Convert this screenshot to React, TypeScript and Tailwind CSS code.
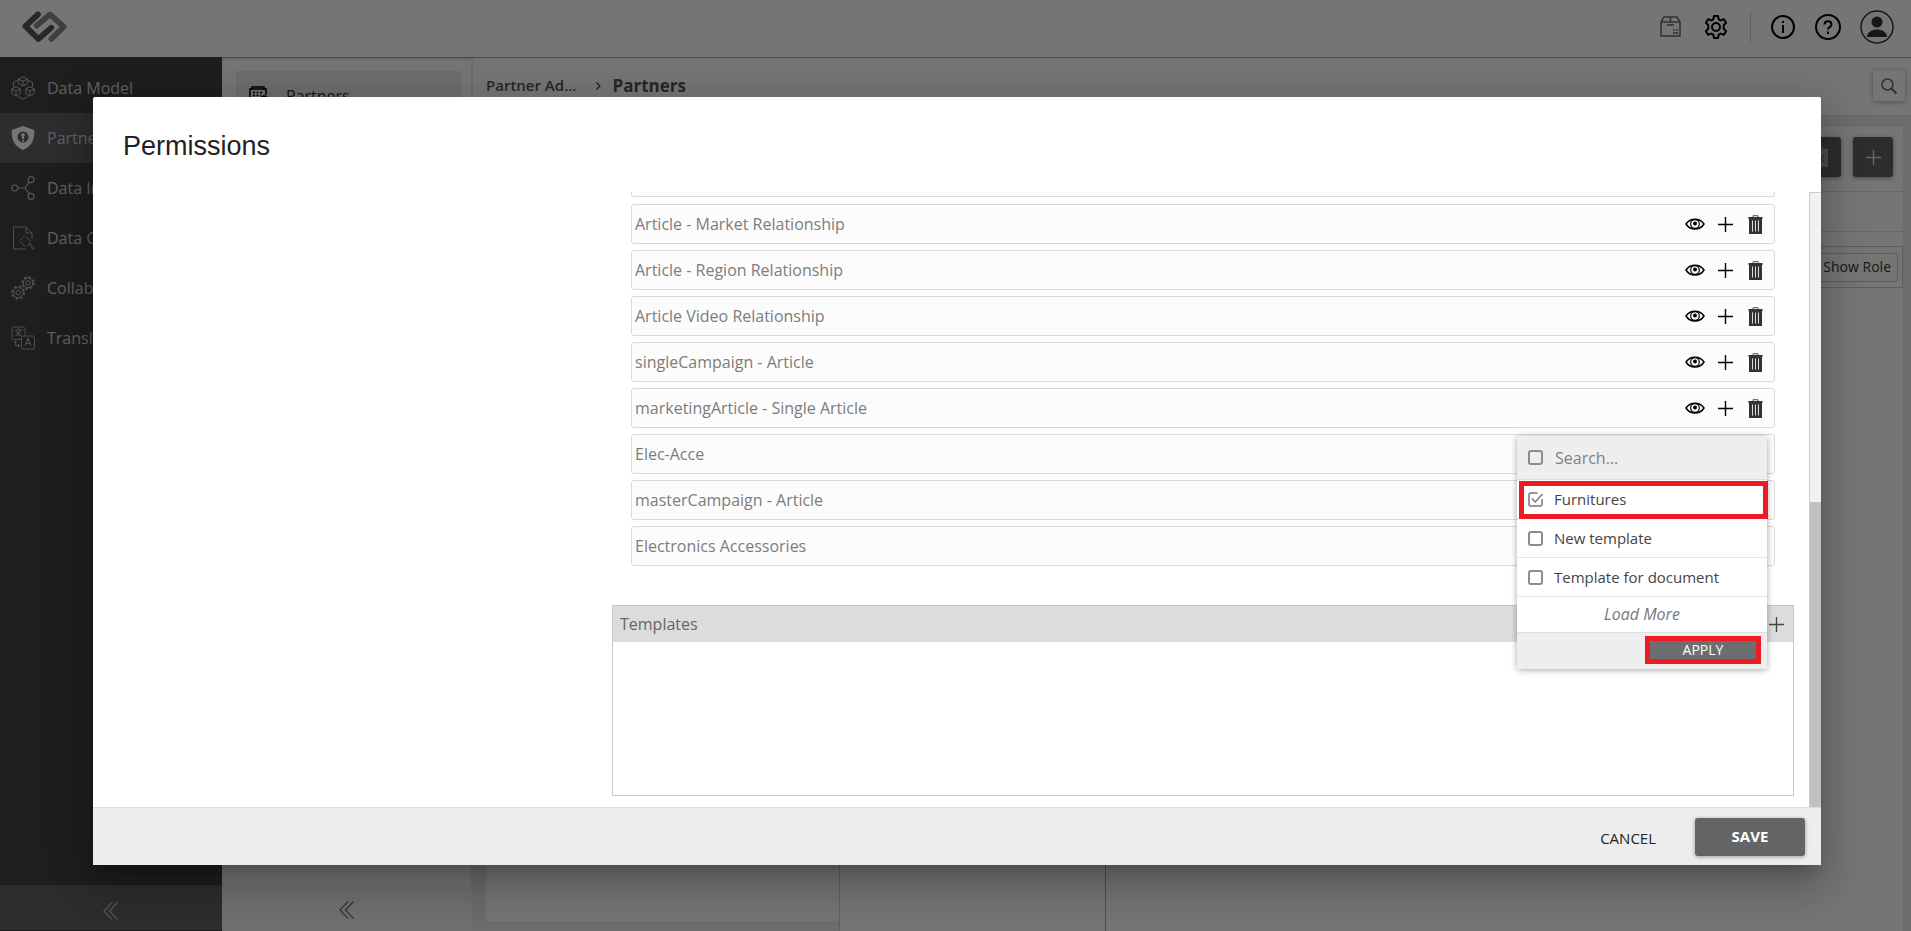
import { useState } from 'react';
import type { ReactNode } from 'react';

const relationships = [
  { name: 'Article - Market Relationship', actions: true },
  { name: 'Article - Region Relationship', actions: true },
  { name: 'Article Video Relationship', actions: true },
  { name: 'singleCampaign - Article', actions: true },
  { name: 'marketingArticle - Single Article', actions: true, menu: true },
  { name: 'Elec-Acce' },
  { name: 'masterCampaign - Article' },
  { name: 'Electronics Accessories' },
];

const Logo = () => (
  <svg className="h-[31px] w-[45px]" viewBox="0 0 135 93" fill="none" strokeWidth="17" strokeLinecap="round" strokeLinejoin="round">
    <path d="M44 44L84 10L125 47L88 84" stroke="#8a8a8a" />
    <path d="M48 10L10 46L49 84L88 50" stroke="#555" />
  </svg>
);

const BoxIcon = () => (
  <svg className="h-[21px] w-[21px]" viewBox="0 0 21 21" fill="none" stroke="#6b6b6b" strokeWidth="1.5">
    <path d="M1 6h19v14H1zM1 6l3-5h13l3 5M10.500 1v5M7 9h7M13 17h5M14 13v2M17 13v2" />
  </svg>
);

const GearIcon = () => (
  <svg className="h-[26px] w-[26px]" viewBox="0 0 26 26" fill="none" stroke="#000" strokeWidth="2" strokeLinejoin="round">
    <path d="M11 2h4l.7 3.3 2 1.1 3.2-1.2 2.2 3.6-2.4 2.4v3.6l2.4 2.4-2.2 3.6-3.2-1.2-2 1.1L15 24h-4l-.7-3.3-2-1.1-3.2 1.2-2.2-3.6 2.4-2.4v-3.6L2.900 8.800l2.200-3.600 3.200 1.200 2-1.100z" />
    <circle cx="13" cy="13" r="4" />
  </svg>
);

const InfoIcon = () => (
  <svg className="h-[26px] w-[26px]" viewBox="0 0 26 26" fill="none" stroke="#000" strokeWidth="2">
    <circle cx="13" cy="13" r="11" />
    <path d="M13 11v8M13 7v2" />
  </svg>
);

const HelpIcon = () => (
  <svg className="h-[26px] w-[26px]" viewBox="0 0 26 26" fill="none" stroke="#000" strokeWidth="2">
    <circle cx="13" cy="13" r="12" />
    <path d="M9.500 10.500c0-4.500 7-4.500 7 0 0 2.500-3.500 2.500-3.500 5M13 17.500v2.500" />
  </svg>
);

const UserIcon = () => (
  <svg className="h-[34px] w-[34px]" viewBox="0 0 34 34">
    <circle cx="17" cy="17" r="16" fill="none" stroke="#333" strokeWidth="1.500" />
    <circle cx="17" cy="12" r="5.500" fill="#333" />
    <path d="M7 27c0-10 20-10 20 0z" fill="#333" />
  </svg>
);

const SearchIcon = () => (
  <svg className="h-4 w-4" viewBox="0 0 16 16" fill="none" stroke="#666" strokeWidth="1.500">
    <circle cx="6.500" cy="6.500" r="5.500" />
    <path d="M10.500 10.500L15.500 15.500" strokeWidth="2" />
  </svg>
);

const PlusIcon = ({ className }: { className: string }) => (
  <svg className={className} viewBox="0 0 15 15" fill="none" stroke="currentColor" strokeWidth="1.400">
    <path d="M7.500 0v15M0 7.500h15" />
  </svg>
);

const EyeIcon = () => (
  <svg className="h-3 w-5" viewBox="0 0 20 12" fill="none" stroke="#000" strokeWidth="1.500">
    <path d="M1 6C5-.5 15-.5 19 6 15 12.500 5 12.500 1 6z" />
    <circle cx="10" cy="6" r="4.300" strokeWidth="1.200" />
    <circle cx="10" cy="5.500" r="2" fill="#000" stroke="none" />
  </svg>
);

const TrashIcon = () => (
  <svg className="h-[19px] w-[15px]" viewBox="0 0 15 19" fill="none">
    <path d="M5 2.500V.7h5v1.800" stroke="#555" />
    <path d="M.5 2h14v2H14v15H1V4H.5z" fill="#333" />
    <path d="M4.500 5.500v11M7.500 5.500v11M10.500 5.500v11" stroke="#ddd" />
  </svg>
);

const ChevronsLeft = ({ color }: { color: string }) => (
  <svg className="h-[18px] w-[15px]" viewBox="0 0 15 18" fill="none" stroke={color} strokeWidth="1.300">
    <path d="M9 .5L1 9l8 8.500M14.500 .5L6.500 9l8 8.500" />
  </svg>
);

const PartnersIcon = () => (
  <svg className="h-5 w-5" viewBox="0 0 20 20" fill="none" stroke="#000" strokeWidth="1.500">
    <path d="M3 3V1h12v2M1 18V3h16v6M1 18h9" />
    <path d="M4 6.500h10M4 9.500h8M4 12.500h5" strokeWidth="1.500" strokeDasharray="2 1.500" />
    <circle cx="15" cy="14" r="4" />
  </svg>
);

const sideIcon = 'h-6 w-6 shrink-0';

const navItems: { label: string; active?: boolean; icon: ReactNode }[] = [
  {
    label: 'Data Model',
    icon: (
      <svg className={sideIcon} viewBox="0 0 24 24" fill="none" stroke="#bbb">
        <path d="M12 .7l4.300 2.300v4.700L12 10 7.700 7.700V3zM7.700 3L12 5.300 16.300 3M12 5.300V10" />
        <path d="M5 10.700l4.300 2.300v4.700L5 20 .7 17.700V13zM.7 13L5 15.300 9.300 13M5 15.300V20" />
        <path d="M19 10.700l4.300 2.300v4.700L19 20l-4.300-2.300V13zM14.700 13l4.300 2.300 4.300-2.300M19 15.300V20" />
        <path d="M7 4L2.500 6.500v4M17 4l4.500 2.500v4M7 20.500l5 2.800 5-2.800" />
      </svg>
    ),
  },
  {
    label: 'Partner',
    active: true,
    icon: (
      <svg className={sideIcon} viewBox="0 0 24 24">
        <path d="M12 0l11.300 4c.5 10-3 16.500-11.300 20C3.700 20.500.2 14 .7 4z" fill="#fff" />
        <circle cx="12" cy="11" r="5.500" fill="#626268" />
        <path d="M12 7a2 2 0 0 1 1 3.500V13h-2v-2.500A2 2 0 0 1 12 7zM11 14h2v1.500h-2z" fill="#fff" />
      </svg>
    ),
  },
  {
    label: 'Data Integration',
    icon: (
      <svg className={sideIcon} viewBox="0 0 24 24" fill="none" stroke="#bbb" strokeWidth="1.200">
        <circle cx="3.700" cy="12" r="3" />
        <circle cx="20" cy="3.700" r="3" />
        <circle cx="20" cy="20.300" r="3" />
        <path d="M6.700 12H14l4.300-5.800M14 12l4.300 5.800" />
      </svg>
    ),
  },
  {
    label: 'Data Governance',
    icon: (
      <svg className={sideIcon} viewBox="0 0 24 24" fill="none" stroke="#aaa">
        <path d="M15 23H2.500V1H15l6 6v6M15 1v6h6" />
        <path d="M14 9.500l6 6M8.500 15l6 6M13 10.500l-3.500 3.500M19 16.500l-3.500 3.500" />
        <path d="M17.500 18l5 5.500 1.300-1.300-5.300-5.200" />
      </svg>
    ),
  },
  {
    label: 'Collaboration',
    icon: (
      <svg className={sideIcon} viewBox="0 0 24 24" fill="none" stroke="#bbb">
        <circle cx="7.200" cy="16.700" r="2.300" />
        <circle cx="7.200" cy="16.700" r="5" />
        <circle cx="7.200" cy="16.700" r="6.200" strokeWidth="1.500" strokeDasharray="2.400 2.470" />
        <circle cx="17" cy="7" r="2.200" />
        <circle cx="17" cy="7" r="4.800" />
        <circle cx="17" cy="7" r="6" strokeWidth="1.500" strokeDasharray="2.300 2.410" />
      </svg>
    ),
  },
  {
    label: 'Translation',
    icon: (
      <svg className={sideIcon} viewBox="0 0 24 24" fill="none" stroke="#aaa">
        <path d="M10 13.500H3a2 2 0 0 1-2-2V3a2 2 0 0 1 2-2h9a2 2 0 0 1 2 2v6.500" />
        <rect x="10.500" y="10" width="13" height="13" rx="1.500" />
        <path d="M3.500 4h8M7.500 2.500V4M4.500 10C8 8.500 9 7 9.500 4M5.500 5.500C6.500 8 8 9 10.500 10M14 19.500l3-7 3 7M15 17.500h4" strokeWidth="1.200" />
        <path d="M4.500 15v4.500h4M3 16.500l1.500-1.700L6 16.500M7 18l1.700 1.500L7 21" />
      </svg>
    ),
  },
];

const CheckBox = ({ checked, onChange, label }: { checked: boolean; onChange: () => void; label?: string }) => (
  <span className="relative flex h-[15px] w-[15px] shrink-0">
    <input
      type="checkbox"
      aria-label={label}
      checked={checked}
      onChange={onChange}
      className="h-[15px] w-[15px] appearance-none rounded-[3px] border-2 border-[#8c8c8c] bg-transparent checked:border-0"
    />
    {checked && (
      <svg className="pointer-events-none absolute inset-0 h-[15px] w-[15px]" viewBox="0 0 15 15" fill="none" stroke="#777" strokeWidth="1.500">
        <path d="M9.500 1H2.500A1.500 1.500 0 0 0 1 2.500v10A1.500 1.500 0 0 0 2.500 14h10a1.500 1.500 0 0 0 1.500-1.500V7" />
        <path d="M4 6.500l3.300 3.500L14.500 2" />
      </svg>
    )}
  </span>
);

const TemplateMenu = () => {
  const [options, setOptions] = useState([
    { name: 'Furnitures', checked: true },
    { name: 'New template', checked: false },
    { name: 'Template for document', checked: false },
  ]);

  const toggle = (name: string) =>
    setOptions(options.map((o) => (o.name === name ? { ...o, checked: !o.checked } : o)));
  const all = options.every((o) => o.checked);

  return (
    <div className="absolute top-[47px] right-[7px] z-10 w-[250px] rounded-[3px] bg-white shadow-[0_1px_6px_rgba(0,0,0,0.35)]">
      <div className="flex h-11 items-center gap-3 rounded-t-[3px] border-b border-[#ddd] bg-[#eee] px-[11px]">
        <CheckBox label="Select all" checked={all} onChange={() => setOptions(options.map((o) => ({ ...o, checked: !all })))} />
        <input type="text" aria-label="Search templates" placeholder="Search..." className="min-w-0 flex-1 bg-transparent text-base outline-none placeholder:text-[#808080]" />
      </div>
      <div className="relative">
        {options.map((option) => (
          <label key={option.name} className="flex h-[39px] items-center gap-[11px] border-b border-[#e8e8e8] px-[11px] text-[15px] text-[#444]">
            <CheckBox checked={option.checked} onChange={() => toggle(option.name)} />
            {option.name}
          </label>
        ))}
        {/* highlight */}
        <div className="pointer-events-none absolute top-px -right-px left-0.5 h-[38px] border-5 border-[#ed1c24]"></div>
      </div>
      <button className="block h-9 w-full border-b border-[#ddd] pb-0.5 text-base leading-8 text-[#777] italic">Load More</button>
      <div className="flex h-9 justify-end rounded-b-[3px] bg-[#eee] px-1.5 pt-[3px]">
        <button className="h-7 w-[116px] border-5 border-[#ed1c24] bg-[#6d6e71] text-sm leading-4 text-white">APPLY</button>
      </div>
    </div>
  );
};

const PermissionsDialog = () => (
  <div className="absolute inset-0 flex bg-black/54 pt-[97px] pr-[90px] pb-[66px] pl-[93px]">
    <div
      role="dialog"
      aria-labelledby="permissions-title"
      className="flex min-w-0 flex-1 flex-col rounded-[2px] bg-white shadow-[0_11px_15px_-7px_rgba(0,0,0,0.2),0_24px_38px_3px_rgba(0,0,0,0.14),0_9px_46px_8px_rgba(0,0,0,0.12)]"
    >
      <h2 id="permissions-title" className="h-[95px] shrink-0 px-[30px] pt-[33px] font-['Liberation_Sans',sans-serif] text-[27px] leading-8 text-[#222]">
        Permissions
      </h2>

      <div className="flex min-h-0 flex-1">
        <div className="w-[519px] shrink-0"></div>
        <div className="flex min-w-0 flex-1 flex-col pr-[15px] pb-[11px]">
          <div className="mr-[19px] mb-[39px] ml-[19px] flex flex-col gap-1.5">
            <div className="mb-px h-[5px] rounded-b-[3px] border border-t-0 border-[#d9d9d9] bg-[#fcfcfc]"></div>
            {relationships.map((item) => (
              <div key={item.name} className="relative flex h-10 items-center justify-between rounded-[3px] border border-[#d9d9d9] bg-[#fcfcfc] pr-[11px] pl-[3px]">
                <span className="text-base text-[#7c7c7c]">{item.name}</span>
                {item.actions && (
                  <div className="flex items-center">
                    <button aria-label="View" className="flex w-[30px] justify-center"><EyeIcon /></button>
                    <button aria-label="Add" className="flex w-[30px] justify-center text-black"><PlusIcon className="h-[15px] w-[15px]" /></button>
                    <button aria-label="Delete" className="flex w-[23px] justify-end"><TrashIcon /></button>
                  </div>
                )}
                {item.menu && <TemplateMenu />}
              </div>
            ))}
          </div>

          <div className="flex flex-1 flex-col border border-[#c8c8c8]">
            <div className="flex h-9 items-center justify-between bg-[#dcdcdc] pr-[9px] pl-[7px]">
              <span className="text-base text-[#666]">Templates</span>
              <button aria-label="Add template" className="text-[#444]"><PlusIcon className="h-[15px] w-[15px]" /></button>
            </div>
          </div>
        </div>
        {/* scrollbar */}
        <div className="flex w-3 shrink-0 flex-col justify-end border-t border-l border-[#ccc] bg-[#f1f1f1]">
          <div className="h-[305px] bg-[#c1c1c1]"></div>
        </div>
      </div>

      <div className="flex h-[58px] shrink-0 items-center justify-end gap-[39px] border-t border-[#ddd] bg-[#ededed] pr-4">
        <button className="pt-1 text-[15px] text-[#222]">CANCEL</button>
        <button className="h-[38px] w-[110px] rounded-[3px] bg-[#636466] text-[15px] font-bold text-white shadow-[0_1px_4px_rgba(0,0,0,0.35)]">SAVE</button>
      </div>
    </div>
  </div>
);

const App = () => {
  return (
    <div className="relative flex h-screen flex-col overflow-hidden bg-white font-['Open_Sans',sans-serif]">
      <header className="flex h-[57px] shrink-0 items-center justify-between bg-white pr-[17px] pb-1 pl-[22px]">
        <Logo />
        <div className="flex items-center">
          <button aria-label="Packages" className="mr-[22px]"><BoxIcon /></button>
          <button aria-label="Settings"><GearIcon /></button>
          <div className="mr-[19px] ml-[21px] h-[30px] w-px bg-[#ccc]"></div>
          <button aria-label="Info" className="mr-[19px]"><InfoIcon /></button>
          <button aria-label="Help" className="mr-[19px]"><HelpIcon /></button>
          <button aria-label="Account"><UserIcon /></button>
        </div>
      </header>

      <div className="flex min-h-0 flex-1">
        <nav className="flex w-[222px] shrink-0 flex-col bg-[#424242] pt-1.5">
          {navItems.map((item) => (
            <a
              key={item.label}
              href="#"
              className={
                item.active
                  ? 'flex h-[50px] items-center gap-3 bg-[#626268] pl-[11px] text-base text-[#d0d0d0]'
                  : 'flex h-[50px] items-center gap-3 pl-[11px] text-base text-[#d0d0d0]'
              }
            >
              {item.icon}
              {item.label}
            </a>
          ))}
          <button aria-label="Collapse menu" className="mt-auto mb-px flex h-[45px] items-center justify-center bg-[#626262] pt-1.5 pr-0.5">
            <ChevronsLeft color="#b5b5b5" />
          </button>
        </nav>

        <div className="flex min-w-0 flex-1 border-t border-[#a0a0a0] shadow-[inset_0_2px_2px_rgba(0,0,0,0.1)]">
          <aside className="flex w-[251px] shrink-0 flex-col border-r-2 border-[#ebebeb] pt-[13px]">
            <a href="#" className="mr-[10px] ml-3.5 flex h-[50px] items-center gap-[17px] rounded-[3px] bg-[#ebebeb] pl-[13px] text-base text-[#333]">
              <PartnersIcon />
              Partners
            </a>
            <button aria-label="Collapse panel" className="mt-auto flex h-[46px] items-center justify-center bg-[#f4f4f4] pt-1">
              <ChevronsLeft color="#777" />
            </button>
          </aside>

          <main className="flex min-w-0 flex-1 flex-col bg-[#ebebeb]">
            <div className="flex h-[58px] shrink-0 items-center border-b border-[#ddd] bg-white pr-1.5 pb-0.5 pl-[13px] text-[#555]">
              <a href="#" className="text-[15px] font-semibold">Partner Ad...</a>
              <svg className="mr-[11px] ml-5 h-2 w-[5px]" viewBox="0 0 5 8" fill="none" stroke="#444" strokeWidth="1.200">
                <path d="M.5 .5L4 4L.5 7.500" />
              </svg>
              <span className="text-[17px] font-bold">Partners</span>
              <button aria-label="Search" className="ml-auto flex h-[31px] w-8 items-center justify-center rounded-[2px] bg-white shadow-[0_1px_5px_rgba(0,0,0,0.35)]">
                <SearchIcon />
              </button>
            </div>

            <div className="flex min-h-0 flex-1 pt-[11px] pr-2 pl-[13px]">
              <div className="mb-[10px] w-[353px] shrink-0 bg-white"></div>
              <div className="flex min-w-0 flex-1 flex-col border-l border-[#d0d0d0] bg-white">
                <div className="flex h-[65px] shrink-0 items-center justify-end gap-3 border-b border-[#ddd] pr-[10px] pb-1">
                  <button aria-label="Delete partner" className="flex h-10 w-10 items-center justify-center rounded-[3px] bg-[#626266] shadow-[0_1px_4px_rgba(0,0,0,0.4)]">
                    <svg className="h-5 w-4" viewBox="0 0 16 20" fill="none">
                      <path d="M5 2V.5h6V2" stroke="#aaa" />
                      <path d="M0 2h16v1h-1v17H1V3H0z" fill="#aaa" />
                      <path d="M5 8l6 7M11 8l-6 7" stroke="#555" />
                    </svg>
                  </button>
                  <button aria-label="Add partner" className="flex h-10 w-10 items-center justify-center rounded-[3px] bg-[#626266] text-[#ddd] shadow-[0_1px_4px_rgba(0,0,0,0.4)]">
                    <PlusIcon className="h-[15px] w-[15px]" />
                  </button>
                </div>
                <div className="h-10 shrink-0 border-b border-[#ddd]"></div>
                <div className="mt-[14px] flex h-[42px] shrink-0 items-center justify-end border border-[#ccc] pr-1">
                  <button className="h-[29px] rounded-[4px] border border-[#ccc] px-1.5 text-sm text-[#333]">Show Role</button>
                </div>
                <div className="flex min-h-0 flex-1">
                  <div className="w-[266px] border-r border-[#aaa]"></div>
                </div>
              </div>
            </div>
          </main>
        </div>
      </div>

      <PermissionsDialog />
    </div>
  );
};

export default App;
